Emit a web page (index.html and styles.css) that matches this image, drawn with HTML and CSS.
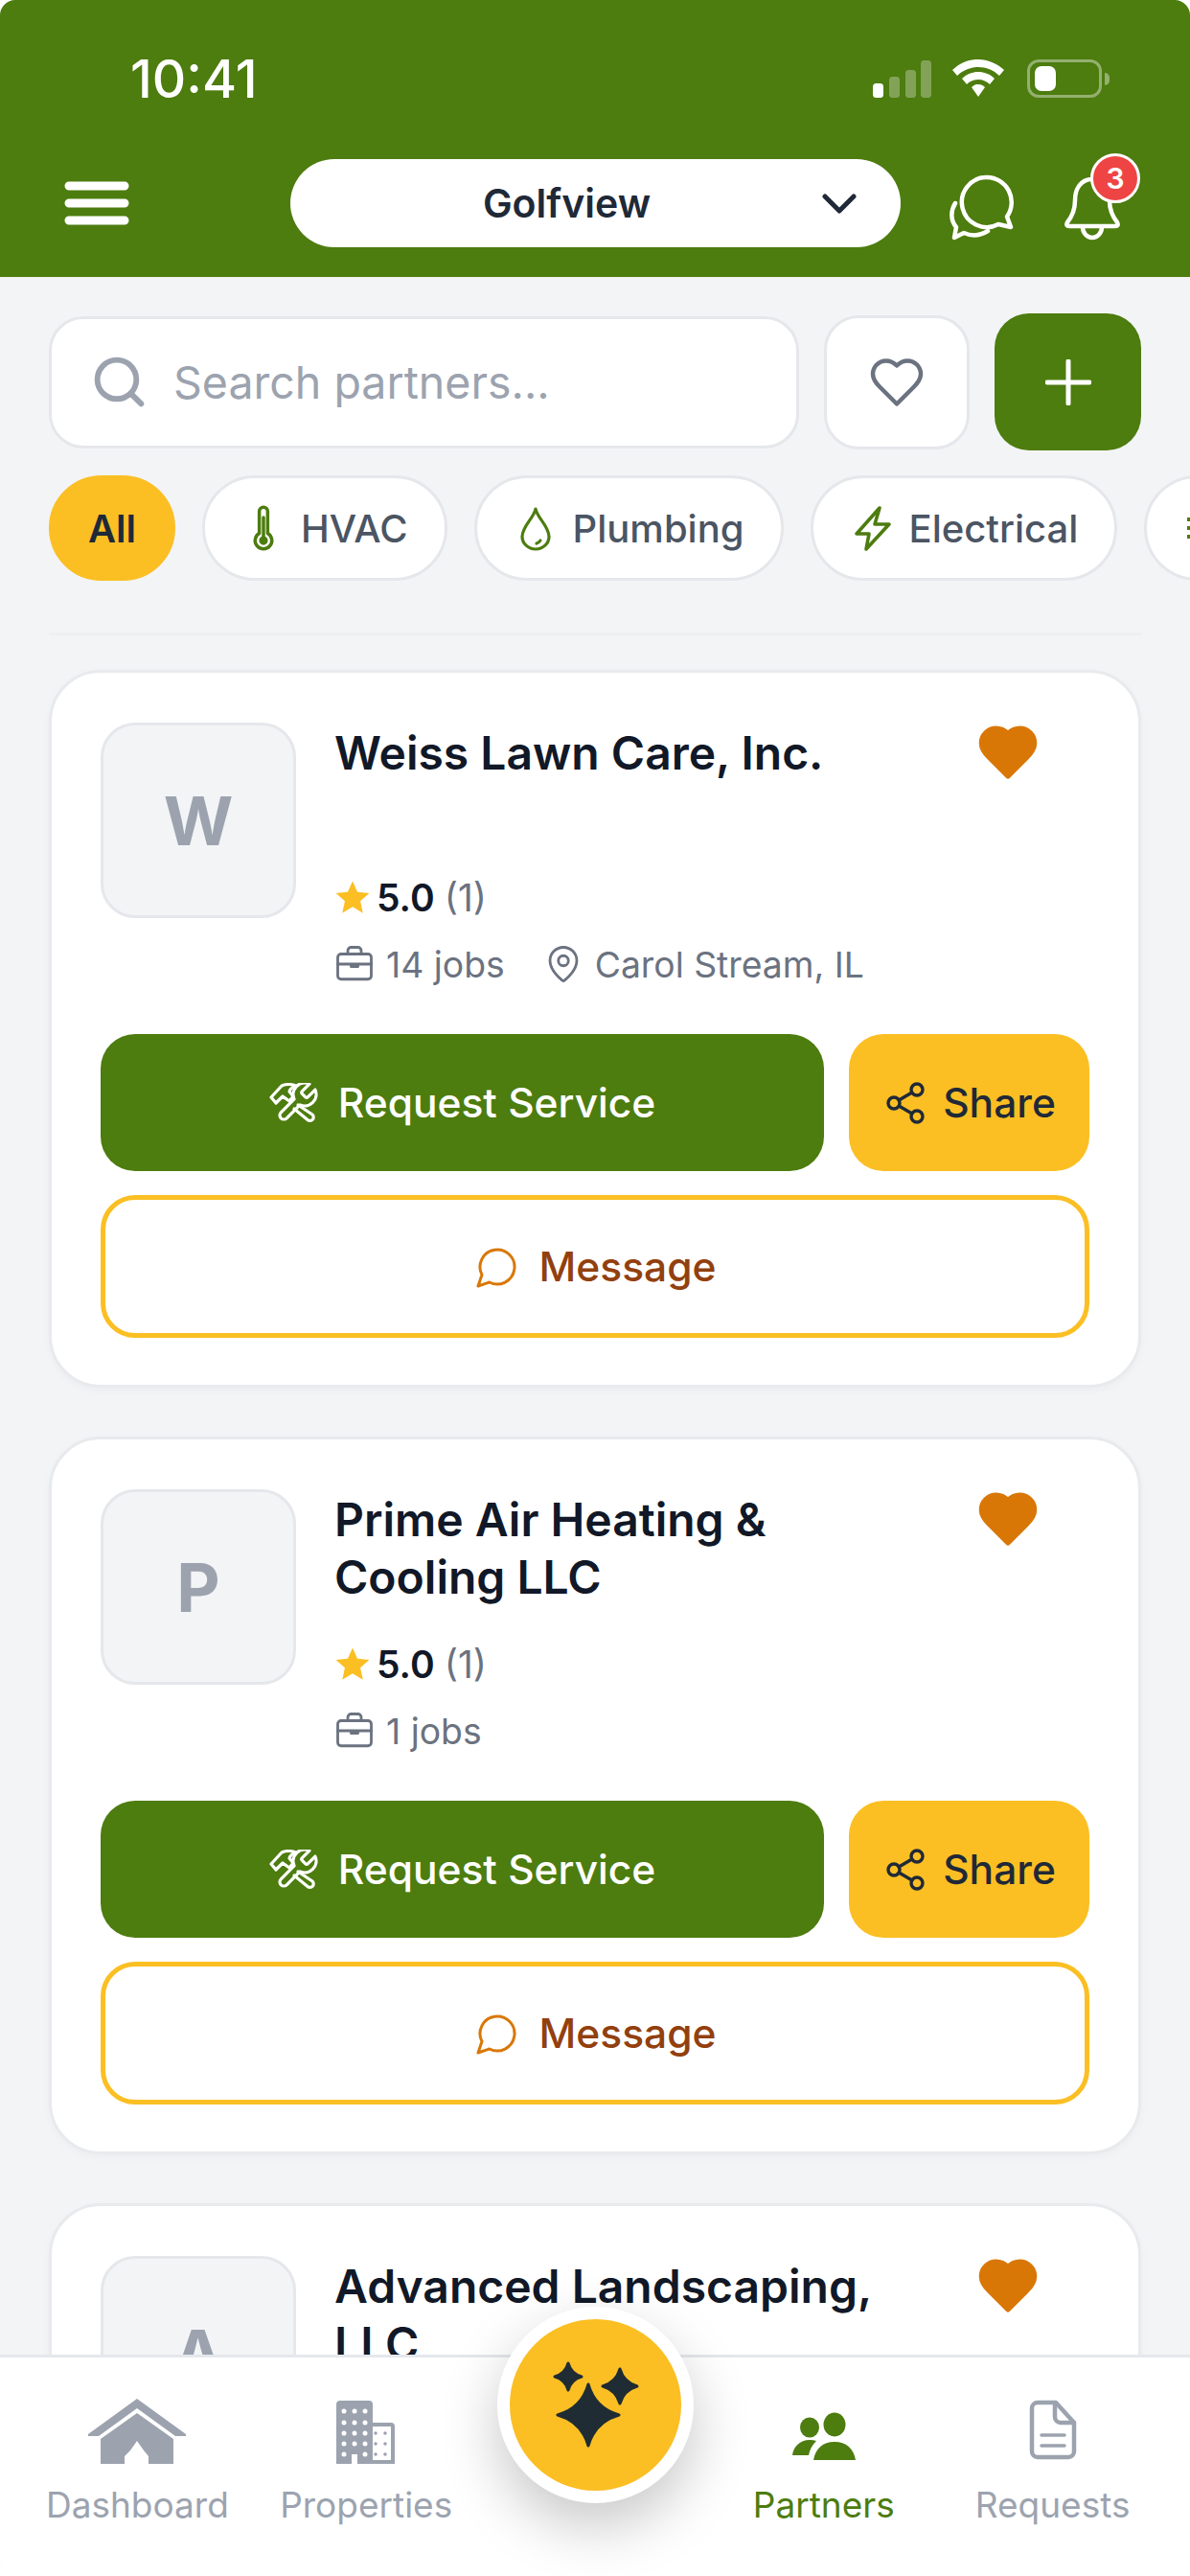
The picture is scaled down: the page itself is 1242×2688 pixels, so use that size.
FILE: index.html
```html
<!DOCTYPE html>
<html lang="en">
<head>
    <meta charset="UTF-8">
    <meta name="viewport" content="width=device-width, initial-scale=1.0">
    <title>Partners</title>
    <link rel="stylesheet" href="styles.css">
</head>
<body>
    <div class="phone">
        <header class="app-header">
            <div class="status-bar">
                <span class="time">10:41</span>
                <div class="status-icons">
                    <svg class="signal" width="61" height="40" viewBox="0 0 61 40" fill="#fff">
                        <rect x="0" y="25" width="11" height="15" rx="3.5"/>
                        <rect x="17" y="18" width="11" height="22" rx="3.5" opacity=".3"/>
                        <rect x="34" y="11" width="11" height="29" rx="3.5" opacity=".3"/>
                        <rect x="50" y="1" width="11" height="39" rx="3.5" opacity=".3"/>
                    </svg>
                    <svg class="wifi" width="54" height="40" viewBox="0 0 54 40" fill="#fff">
                        <path d="M27 0c10 0 19 4 27 11l-5 6C43 11 35 8 27 8S11 11 5 17L0 11C8 4 17 0 27 0z"/>
                        <path d="M27 13c6 0 12 2 17 7l-5 6c-3-3-7-5-12-5s-9 2-12 5l-5-6c5-5 11-7 17-7z"/>
                        <path d="M27 26c3 0 5 1 7 3l-7 10-7-10c2-2 4-3 7-3z"/>
                    </svg>
                    <div class="battery"><span class="battery-level"></span></div>
                    <span class="battery-nub"></span>
                </div>
            </div>
            <div class="top-bar">
                <svg class="menu-icon" width="68" height="46" viewBox="0 0 68 46" stroke="#fff" stroke-width="9" stroke-linecap="round">
                    <path d="M5 5h58M5 23h58M5 41h58"/>
                </svg>
                <div class="property-select">
                    <span>Golfview</span>
                    <svg class="chevron" width="36" height="22" viewBox="0 0 36 22" fill="none" stroke="#1f2937" stroke-width="5" stroke-linecap="round" stroke-linejoin="round">
                        <path d="M3 3l15 15L33 3"/>
                    </svg>
                </div>
                <svg class="chat-icon" width="70" height="70" viewBox="0 0 70 70" fill="none" stroke="#fff" stroke-width="4.5" stroke-linecap="round" stroke-linejoin="round">
                    <path d="M39 3A26 26 0 0 1 60 44L64 55 51 52A26 26 0 1 1 39 3Z"/>
                    <path d="M6 30C1 38 1 48 7 55L5 66 15 61C24 65 32 64 40 59"/>
                </svg>
                <div class="bell">
                    <svg width="58" height="68" viewBox="0 0 58 68" fill="none" stroke="#fff" stroke-width="4.5" stroke-linecap="round" stroke-linejoin="round">
                        <path d="M29 3C17 3 11 13 11 25C11 36 7 43 3 48Q1 52 5 52H53Q57 52 55 48C51 43 47 36 47 25C47 13 41 3 29 3Z"/>
                        <path d="M19 53a10 11 0 0 0 20 0"/>
                    </svg>
                    <span class="badge">3</span>
                </div>
            </div>
        </header>

        <div class="toolbar">
            <div class="search-box">
                <svg width="61" height="61" viewBox="0 0 24 24" fill="none" stroke="#9ca3af" stroke-width="2.3" stroke-linecap="round">
                    <circle cx="11" cy="11" r="8"/>
                    <path d="M21 21l-4.35-4.35"/>
                </svg>
                <span class="placeholder">Search partners...</span>
            </div>
            <div class="fav-filter">
                <svg width="60" height="60" viewBox="0 0 24 24" fill="none" stroke="#6b7280" stroke-width="1.8" stroke-linejoin="round">
                    <path d="M19 14c1.49-1.46 3-3.21 3-5.5A5.5 5.5 0 0 0 16.5 3c-1.76 0-3 .5-4.5 2-1.5-1.5-2.74-2-4.5-2A5.5 5.5 0 0 0 2 8.5c0 2.3 1.5 4.05 3 5.5l7 7Z"/>
                </svg>
            </div>
            <div class="add-btn">
                <svg width="48" height="48" viewBox="0 0 48 48" stroke="#fff" stroke-width="5" stroke-linecap="round">
                    <path d="M24 2v44M2 24h44"/>
                </svg>
            </div>
        </div>

        <div class="chips">
            <div class="chip chip-active">All</div>
            <div class="chip">
                <svg class="chip-icon" viewBox="1 1 22 22" fill="none" stroke="#4d7c0f" stroke-width="1.6" stroke-linecap="round" stroke-linejoin="round">
                    <path d="M14 4v10.54a4 4 0 1 1-4 0V4a2 2 0 0 1 4 0Z"/>
                    <path d="M12 7v10"/>
                    <circle cx="12" cy="18" r="1.3" fill="#4d7c0f"/>
                </svg>
                HVAC
            </div>
            <div class="chip">
                <svg class="chip-icon" viewBox="0 0 48 48" fill="none" stroke="#4d7c0f" stroke-width="3.2" stroke-linecap="round" stroke-linejoin="round">
                    <path d="M24 4C22 14 10 22 10 33a14 13 0 0 0 28 0C38 22 26 14 24 4Z"/>
                    <path d="M29 37a7 7 0 0 1-4 3"/>
                </svg>
                Plumbing
            </div>
            <div class="chip">
                <svg class="chip-icon" viewBox="0 0 48 48" fill="none" stroke="#4d7c0f" stroke-width="3.6" stroke-linejoin="round">
                    <path d="M32 3L8 30H21L18 46L42 20H27Z"/>
                </svg>
                Electrical
            </div>
            <div class="chip">
                <svg class="chip-icon" viewBox="0 0 48 48" fill="none" stroke="#4d7c0f" stroke-width="4">
                    <path d="M5 15h8M5 24h8M5 33h8"/>
                </svg>
            </div>
        </div>
        <div class="chips-divider"></div>

        <main class="partner-list">
            <article class="card">
                <div class="card-top">
                    <div class="avatar">W</div>
                    <div class="info">
                        <div class="name-row">
                            <h2 class="name">Weiss Lawn Care, Inc.</h2>
                            <svg class="fav" viewBox="0 0 24 24" fill="#d97706" stroke="#d97706" stroke-width="2" stroke-linejoin="round">
                                <path d="M19 14c1.49-1.46 3-3.21 3-5.5A5.5 5.5 0 0 0 16.5 3c-1.76 0-3 .5-4.5 2-1.5-1.5-2.74-2-4.5-2A5.5 5.5 0 0 0 2 8.5c0 2.3 1.5 4.05 3 5.5l7 7Z"/>
                            </svg>
                        </div>
                        <div class="rating">
                            <svg class="star" viewBox="0 0 24 24" fill="#fbbf24"><path d="M12 1.5l3.2 7.2 7.8.8-5.9 5.2 1.7 7.8-6.8-4-6.8 4 1.7-7.8L1 9.5l7.8-.8z"/></svg>
                            <strong>5.0</strong>
                            <span>(1)</span>
                        </div>
                        <div class="meta">
                            <span class="meta-item">
                                <svg class="meta-icon" viewBox="0 0 24 24" fill="none" stroke="#6b7280" stroke-width="1.6" stroke-linecap="round" stroke-linejoin="round">
                                    <rect x="2" y="6" width="20" height="15" rx="2"/>
                                    <path d="M16 6V4a2 2 0 0 0-2-2h-4a2 2 0 0 0-2 2v2M2 12h20M10 12v1.5h4V12"/>
                                </svg>
                                14 jobs
                            </span>
                            <span class="meta-item">
                                <svg class="meta-icon" viewBox="0 0 24 24" fill="none" stroke="#6b7280" stroke-width="1.6" stroke-linecap="round" stroke-linejoin="round">
                                    <path d="M20 10c0 5-5.5 10.2-7.4 11.8a1 1 0 0 1-1.2 0C9.5 20.2 4 15 4 10a8 8 0 0 1 16 0"/>
                                    <circle cx="12" cy="10" r="3"/>
                                </svg>
                                Carol Stream, IL
                            </span>
                        </div>
                    </div>
                </div>
                <div class="actions">
                    <button class="btn btn-request">
                        <svg class="tools-icon" width="52" height="42" viewBox="0 0 52 42" fill="none" stroke="#fff" stroke-width="3.2" stroke-linecap="round" stroke-linejoin="round">
                            <path d="M34.4 8.6a2 2 0 0 0 0 2.8l3.2 3.2a2 2 0 0 0 2.8 0l7.54-7.54a12 12 0 0 1-15.88 15.88l-13.82 13.82a4.24 4.24 0 0 1-6-6l13.82-13.82a12 12 0 0 1 15.88-15.88z"/>
                            <path d="M2 15L13 3Q20 0 28 3Q22 5 21 9L25 14 21 19 14 14 7 21Z"/>
                            <path d="M30 23L45 33a3.6 3.6 0 0 1-5 5.5L26 27"/>
                        </svg>
                        Request Service
                    </button>
                    <button class="btn btn-share">
                        <svg class="btn-icon" viewBox="0 0 24 24" fill="none" stroke="#1f2937" stroke-width="1.7" stroke-linecap="round" stroke-linejoin="round">
                            <circle cx="18" cy="5" r="3"/><circle cx="6" cy="12" r="3"/><circle cx="18" cy="19" r="3"/>
                            <path d="M8.59 13.51l6.83 3.98M15.41 6.51l-6.82 3.98"/>
                        </svg>
                        Share
                    </button>
                </div>
                <button class="btn btn-message">
                    <svg class="btn-icon" viewBox="0 0 24 24" fill="none" stroke="#d97706" stroke-width="1.5" stroke-linecap="round" stroke-linejoin="round">
                        <path d="M7.9 20A9 9 0 1 0 4 16.1L2 22Z"/>
                    </svg>
                    Message
                </button>
            </article>

            <article class="card">
                <div class="card-top">
                    <div class="avatar">P</div>
                    <div class="info">
                        <div class="name-row">
                            <h2 class="name">Prime Air Heating &amp; Cooling LLC</h2>
                            <svg class="fav" viewBox="0 0 24 24" fill="#d97706" stroke="#d97706" stroke-width="2" stroke-linejoin="round">
                                <path d="M19 14c1.49-1.46 3-3.21 3-5.5A5.5 5.5 0 0 0 16.5 3c-1.76 0-3 .5-4.5 2-1.5-1.5-2.74-2-4.5-2A5.5 5.5 0 0 0 2 8.5c0 2.3 1.5 4.05 3 5.5l7 7Z"/>
                            </svg>
                        </div>
                        <div class="rating">
                            <svg class="star" viewBox="0 0 24 24" fill="#fbbf24"><path d="M12 1.5l3.2 7.2 7.8.8-5.9 5.2 1.7 7.8-6.8-4-6.8 4 1.7-7.8L1 9.5l7.8-.8z"/></svg>
                            <strong>5.0</strong>
                            <span>(1)</span>
                        </div>
                        <div class="meta">
                            <span class="meta-item">
                                <svg class="meta-icon" viewBox="0 0 24 24" fill="none" stroke="#6b7280" stroke-width="1.6" stroke-linecap="round" stroke-linejoin="round">
                                    <rect x="2" y="6" width="20" height="15" rx="2"/>
                                    <path d="M16 6V4a2 2 0 0 0-2-2h-4a2 2 0 0 0-2 2v2M2 12h20M10 12v1.5h4V12"/>
                                </svg>
                                1 jobs
                            </span>
                        </div>
                    </div>
                </div>
                <div class="actions">
                    <button class="btn btn-request">
                        <svg class="tools-icon" width="52" height="42" viewBox="0 0 52 42" fill="none" stroke="#fff" stroke-width="3.2" stroke-linecap="round" stroke-linejoin="round">
                            <path d="M34.4 8.6a2 2 0 0 0 0 2.8l3.2 3.2a2 2 0 0 0 2.8 0l7.54-7.54a12 12 0 0 1-15.88 15.88l-13.82 13.82a4.24 4.24 0 0 1-6-6l13.82-13.82a12 12 0 0 1 15.88-15.88z"/>
                            <path d="M2 15L13 3Q20 0 28 3Q22 5 21 9L25 14 21 19 14 14 7 21Z"/>
                            <path d="M30 23L45 33a3.6 3.6 0 0 1-5 5.5L26 27"/>
                        </svg>
                        Request Service
                    </button>
                    <button class="btn btn-share">
                        <svg class="btn-icon" viewBox="0 0 24 24" fill="none" stroke="#1f2937" stroke-width="1.7" stroke-linecap="round" stroke-linejoin="round">
                            <circle cx="18" cy="5" r="3"/><circle cx="6" cy="12" r="3"/><circle cx="18" cy="19" r="3"/>
                            <path d="M8.59 13.51l6.83 3.98M15.41 6.51l-6.82 3.98"/>
                        </svg>
                        Share
                    </button>
                </div>
                <button class="btn btn-message">
                    <svg class="btn-icon" viewBox="0 0 24 24" fill="none" stroke="#d97706" stroke-width="1.5" stroke-linecap="round" stroke-linejoin="round">
                        <path d="M7.9 20A9 9 0 1 0 4 16.1L2 22Z"/>
                    </svg>
                    Message
                </button>
            </article>

            <article class="card">
                <div class="card-top">
                    <div class="avatar">A</div>
                    <div class="info">
                        <div class="name-row">
                            <h2 class="name">Advanced Landscaping, LLC</h2>
                            <svg class="fav" viewBox="0 0 24 24" fill="#d97706" stroke="#d97706" stroke-width="2" stroke-linejoin="round">
                                <path d="M19 14c1.49-1.46 3-3.21 3-5.5A5.5 5.5 0 0 0 16.5 3c-1.76 0-3 .5-4.5 2-1.5-1.5-2.74-2-4.5-2A5.5 5.5 0 0 0 2 8.5c0 2.3 1.5 4.05 3 5.5l7 7Z"/>
                            </svg>
                        </div>
                    </div>
                </div>
            </article>
        </main>

        <nav class="bottom-nav">
            <a class="nav-item" href="#">
                <svg class="nav-icon" width="102" height="70" viewBox="0 0 102 70" fill="#9ca3af">
                    <path d="M51 0L102 37V39H91L51 10 11 39H0V37Z"/>
                    <path d="M51 15L89 42V68H13V42Z"/>
                    <path d="M51 44L58 54 63 60V68H38V60L44 54Z" fill="#fff"/>
                </svg>
                Dashboard
            </a>
            <a class="nav-item" href="#">
                <svg class="nav-icon" width="62" height="70" viewBox="0 0 62 70" fill="#9ca3af">
                    <path d="M4 2H34a4 4 0 0 1 4 4V68H22V58H16V68H0V6a4 4 0 0 1 4-4Z"/>
                    <path d="M38 25H57a4 4 0 0 1 4 4V68H38V64H57V29H38Z"/>
                    <g fill="#fff">
                        <circle cx="8" cy="13" r="2.5"/><circle cx="19" cy="13" r="2.5"/><circle cx="30" cy="13" r="2.5"/>
                        <circle cx="8" cy="25" r="2.5"/><circle cx="19" cy="25" r="2.5"/><circle cx="30" cy="25" r="2.5"/>
                        <circle cx="8" cy="36" r="2.5"/><circle cx="19" cy="36" r="2.5"/><circle cx="30" cy="36" r="2.5"/>
                        <circle cx="8" cy="47" r="2.5"/><circle cx="19" cy="47" r="2.5"/><circle cx="30" cy="47" r="2.5"/>
                        <circle cx="8" cy="58" r="2.5"/><circle cx="30" cy="58" r="2.5"/>
                    </g>
                    <g>
                        <circle cx="41" cy="36" r="1.8"/><circle cx="51" cy="36" r="1.8"/>
                        <circle cx="41" cy="47" r="1.8"/><circle cx="51" cy="47" r="1.8"/>
                        <circle cx="41" cy="58" r="1.8"/><circle cx="51" cy="58" r="1.8"/>
                    </g>
                </svg>
                Properties
            </a>
            <div class="nav-spacer"></div>
            <a class="nav-item nav-active" href="#">
                <svg class="nav-icon" width="66" height="70" viewBox="0 0 66 70" fill="#4d7c0f">
                    <ellipse cx="18" cy="30" rx="10" ry="10.5"/>
                    <ellipse cx="44" cy="27" rx="11.5" ry="12.5"/>
                    <path d="M22 64C24 52 32 45 44 45C56 45 64 52 66 64Z"/>
                    <path d="M0 59C1 50 8 43 18 43Q22 43 25 44C21 48 18 53 17 59Z"/>
                </svg>
                Partners
            </a>
            <a class="nav-item" href="#">
                <svg class="nav-icon" width="50" height="70" viewBox="0 0 50 70" fill="none" stroke="#9ca3af" stroke-width="4.5" stroke-linecap="round" stroke-linejoin="round">
                    <path d="M9 4H28L47 25V55a6 6 0 0 1-6 6H9a6 6 0 0 1-6-6V10a6 6 0 0 1 6-6Z"/>
                    <path d="M27 4V19a6 6 0 0 0 6 6H47"/>
                    <path d="M13 38H37M13 49H37" stroke-width="3.5"/>
                </svg>
                Requests
            </a>
        </nav>

        <button class="ai-fab">
            <svg width="100" height="96" viewBox="0 0 100 96" fill="#1f2c33" stroke="#1f2c33" stroke-width="3" stroke-linejoin="round">
                <path d="M21 4Q24 15 35 18Q24 21 21 32Q18 21 7 18Q18 15 21 4Z"/>
                <path d="M75 10Q79 24 93 28Q79 32 75 46Q71 32 57 28Q71 24 75 10Z"/>
                <path d="M42 26Q49 51 74 58Q49 65 42 90Q35 65 10 58Q35 51 42 26Z"/>
            </svg>
        </button>
    </div>
</body>
</html>
```

FILE: styles.css
```css
* {
    box-sizing: border-box;
}

body {
    margin: 0;
    background-color: #fff;
    font-family: Inter, "Liberation Sans", sans-serif;
}

.phone {
    position: relative;
    width: 1242px;
    height: 2688px;
    overflow: hidden;
    background-color: #f3f4f6;
    border-radius: 16px;
}

/* header */
.app-header {
    height: 289px;
    background-color: #4d7c0f;
}

.status-bar {
    display: flex;
    justify-content: space-between;
    align-items: center;
    height: 166px;
    padding: 0 84px 2px 136px;
}

.time {
    color: #fff;
    font-size: 55px;
    font-weight: 500;
}

.status-icons {
    display: flex;
    align-items: center;
}

.wifi {
    margin-left: 22px;
}

.battery {
    margin-left: 24px;
    width: 78px;
    height: 40px;
    padding: 4px 5px;
    border: 3px solid rgba(255, 255, 255, 0.4);
    border-radius: 12px;
}

.battery-level {
    display: block;
    width: 22px;
    height: 100%;
    background-color: #fff;
    border-radius: 7px;
}

.battery-nub {
    width: 5px;
    height: 13px;
    margin-left: 3px;
    background-color: rgba(255, 255, 255, 0.4);
    border-radius: 0 5px 5px 0;
}

.top-bar {
    display: flex;
    align-items: center;
    height: 92px;
    padding-left: 67px;
}

.property-select {
    position: relative;
    display: flex;
    justify-content: center;
    align-items: center;
    width: 637px;
    height: 92px;
    margin-left: 168px;
    padding-right: 60px;
    background-color: #fff;
    border-radius: 46px;
    color: #1f2937;
    font-size: 41px;
    font-weight: 600;
}

.chevron {
    position: absolute;
    right: 46px;
    top: 36px;
}

.chat-icon {
    margin-left: 51px;
    margin-top: 10px;
}

.bell {
    position: relative;
    margin-left: 50px;
    margin-top: 12px;
    height: 68px;
}

.badge {
    position: absolute;
    top: -24px;
    left: 27px;
    display: flex;
    justify-content: center;
    align-items: center;
    width: 52px;
    height: 52px;
    background-color: #ef4444;
    border: 3px solid #fff;
    border-radius: 50%;
    color: #fff;
    font-size: 30px;
    font-weight: 600;
}

/* search row */
.toolbar {
    display: flex;
    align-items: center;
    height: 143px;
    margin-top: 38px;
    padding: 0 51px;
}

.search-box {
    display: flex;
    align-items: center;
    gap: 26px;
    width: 783px;
    height: 138px;
    padding-left: 40px;
    background-color: #fff;
    border: 3px solid #e5e7eb;
    border-radius: 36px;
}

.placeholder {
    color: #9ca3af;
    font-size: 46.5px;
}

.fav-filter {
    display: flex;
    justify-content: center;
    align-items: center;
    width: 152px;
    height: 140px;
    margin-left: 26px;
    background-color: #fff;
    border: 3px solid #e5e7eb;
    border-radius: 36px;
}

.add-btn {
    display: flex;
    justify-content: center;
    align-items: center;
    width: 153px;
    height: 143px;
    margin-left: 26px;
    background-color: #4d7c0f;
    border-radius: 36px;
}

/* category chips */
.chips {
    display: flex;
    gap: 28px;
    margin-top: 26px;
    padding-left: 51px;
    white-space: nowrap;
}

.chip {
    display: flex;
    flex-shrink: 0;
    align-items: center;
    gap: 15px;
    height: 110px;
    padding: 0 38px 0 37px;
    background-color: #fff;
    border: 3px solid #e5e7eb;
    border-radius: 55px;
    color: #4b5563;
    font-size: 40px;
    font-weight: 500;
}

.chip-active {
    padding: 0 38px;
    background-color: #fbbf24;
    border-color: #fbbf24;
    color: #1f2937;
    font-weight: 600;
}

.chip-icon {
    width: 48px;
    height: 48px;
}

.chips-divider {
    height: 3px;
    margin: 54px 51px 0;
    background-color: #eeeff1;
}

/* partner cards */
.partner-list {
    display: flex;
    flex-direction: column;
    gap: 51px;
    margin-top: 36px;
    padding: 0 51px;
}

.card {
    flex-shrink: 0;
    height: 749px;
    padding: 52px 51px;
    background-color: #fff;
    border: 3px solid #e8eaed;
    border-radius: 54px;
    box-shadow: 0 3px 8px rgba(0, 0, 0, 0.03);
}

.card-top {
    display: flex;
    gap: 40px;
    height: 325px;
}

.avatar {
    display: flex;
    flex-shrink: 0;
    justify-content: center;
    align-items: center;
    width: 204px;
    height: 204px;
    background-color: #f3f4f6;
    border: 3px solid #e5e7eb;
    border-radius: 36px;
    color: #9ca3af;
    font-size: 70px;
    font-weight: 700;
}

.info {
    flex: 1;
    padding-top: 2px;
}

.name-row {
    display: flex;
    justify-content: space-between;
    height: 150px;
}

.name {
    margin: 0;
    max-width: 600px;
    color: #111827;
    font-size: 48px;
    font-weight: 600;
    line-height: 60px;
}

.fav {
    flex-shrink: 0;
    width: 66px;
    height: 66px;
    margin-top: -4px;
    margin-right: 52px;
}

.rating {
    display: flex;
    align-items: center;
    gap: 6px;
    height: 60px;
    color: #6b7280;
    font-size: 39px;
}

.rating strong {
    margin-right: 4px;
    color: #111827;
    font-weight: 600;
}

.star {
    width: 38px;
    height: 38px;
}

.meta {
    display: flex;
    gap: 40px;
    margin-top: 10px;
    color: #6b7280;
    font-size: 37.3px;
}

.meta-item {
    display: flex;
    align-items: center;
    gap: 12px;
    height: 60px;
}

.meta-icon {
    width: 42px;
    height: 42px;
}

/* buttons */
.actions {
    display: flex;
    gap: 26px;
}

.btn {
    display: flex;
    justify-content: center;
    align-items: center;
    gap: 20px;
    border: none;
    border-radius: 36px;
    font-family: inherit;
    font-size: 42.5px;
    font-weight: 500;
}

.btn-icon {
    width: 48px;
    height: 48px;
}

.btn-request {
    flex: 1;
    height: 143px;
    background-color: #4d7c0f;
    color: #fff;
}

.btn-share {
    gap: 15px;
    width: 251px;
    height: 143px;
    padding: 0;
    background-color: #fbbf24;
    color: #1f2937;
}

.btn-message {
    width: 100%;
    height: 149px;
    margin-top: 25px;
    background-color: #fff;
    border: 5px solid #fbbf24;
    color: #92400e;
}

/* bottom nav */
.bottom-nav {
    position: absolute;
    left: 0;
    bottom: 0;
    display: grid;
    grid-template-columns: repeat(5, 1fr);
    width: 100%;
    height: 231px;
    padding: 0 24px;
    background-color: #fff;
    border-top: 3px solid #e5e7eb;
}

.nav-item {
    display: flex;
    flex-direction: column;
    align-items: center;
    padding-top: 43px;
    color: #9ca3af;
    font-size: 37px;
    text-decoration: none;
}

.nav-icon {
    height: 70px;
    margin-bottom: 18px;
}

.nav-active {
    color: #4d7c0f;
}

.ai-fab {
    position: absolute;
    left: 519px;
    top: 2407px;
    display: flex;
    justify-content: center;
    align-items: center;
    width: 205px;
    height: 205px;
    padding: 0;
    background-color: #fbbf24;
    border: 13px solid #fff;
    border-radius: 50%;
    box-shadow: 0 24px 60px rgba(0, 0, 0, 0.22);
}
```
